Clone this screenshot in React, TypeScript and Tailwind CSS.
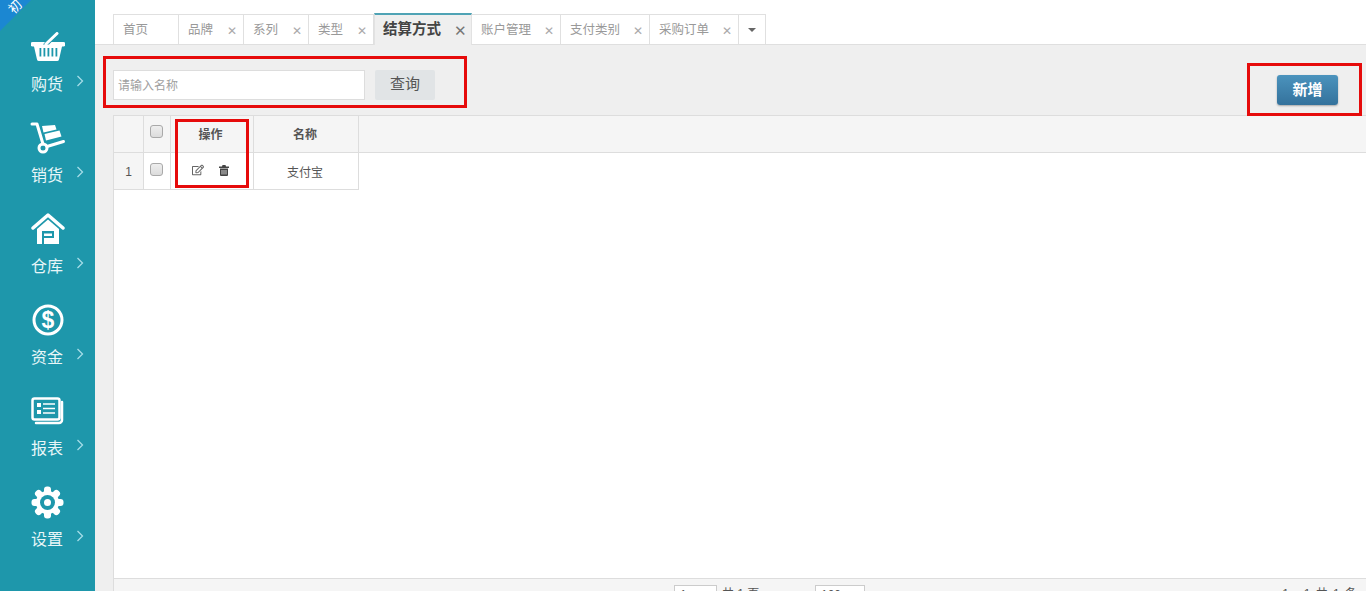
import React from 'react';
import { FaRegEdit } from 'react-icons/fa';

const BasketIcon = () => (
  <svg width="34" height="30" viewBox="0 0 34 30" fill="#fff">
    <path d="M15 12 L26 1.5" stroke="#fff" strokeWidth="3" strokeLinecap="round" fill="none" />
    <path d="M1.5 10 H14 L12 12.5 H18 L20.5 10 H32.5 A1.5 1.5 0 0 1 32.5 14.5 H31 L28 27.5 A2 2 0 0 1 26 29 H8 A2 2 0 0 1 6 27.5 L3 14.5 H1.5 A1.5 1.5 0 0 1 1.5 10z" />
    <g fill="#1e97ab">
      <rect x="8.5" y="16" width="1.8" height="8.5" />
      <rect x="12.5" y="16" width="1.8" height="8.5" />
      <rect x="16.5" y="16" width="1.8" height="8.5" />
      <rect x="20.5" y="16" width="1.8" height="8.5" />
      <rect x="24.5" y="16" width="1.8" height="8.5" />
    </g>
  </svg>
);

const CartIcon = () => (
  <svg width="36" height="32" viewBox="0 0 36 32" fill="#fff">
    <path d="M2 2 h5 l6 20" stroke="#fff" strokeWidth="3" strokeLinecap="round" strokeLinejoin="round" fill="none" />
    <path d="M17 24.5 L33.5 19.5" stroke="#fff" strokeWidth="3" strokeLinecap="round" />
    <circle cx="13" cy="26" r="4" fill="none" stroke="#fff" strokeWidth="3" />
    <path d="M12 4 l13 -1 1.5 4.5 -13 3z" />
    <path d="M14.5 12 l15 -3.5 2 6 -15.5 4z" />
  </svg>
);

const HouseIcon = () => (
  <svg width="34" height="32" viewBox="0 0 34 32" fill="#fff">
    <path d="M2 15 L17 2 L32 15" stroke="#fff" strokeWidth="3.5" strokeLinecap="round" strokeLinejoin="round" fill="none" />
    <path d="M6 16 L17 6.5 L28 16 V31 H6z" />
    <rect x="11" y="18" width="12" height="13" fill="#1e97ab" />
    <rect x="13" y="20.5" width="8" height="2.5" fill="#fff" />
    <rect x="13" y="25" width="12" height="6" fill="#fff" />
  </svg>
);

const DollarIcon = () => (
  <svg width="32" height="32" viewBox="0 0 32 32">
    <circle cx="16" cy="16" r="14" fill="none" stroke="#fff" strokeWidth="3" />
    <text x="16" y="24" textAnchor="middle" fill="#fff" fontSize="23" fontWeight="700" fontFamily="'Liberation Sans', sans-serif">$</text>
  </svg>
);

const NewsIcon = () => (
  <svg width="33" height="28" viewBox="0 0 33 28" fill="none" stroke="#fff">
    <rect x="1.5" y="1.5" width="27" height="21" rx="2" strokeWidth="2.5" />
    <path d="M31 5 V23 a3 3 0 0 1 -3 3 H5" strokeWidth="2.5" strokeLinecap="round" />
    <rect x="6" y="6" width="4" height="4" fill="#fff" stroke="none" />
    <rect x="6" y="13" width="4" height="4" fill="#fff" stroke="none" />
    <path d="M12 7 H24 M12 11.5 H24 M12 16 H24" strokeWidth="1.6" />
  </svg>
);

const GearIcon = () => (
  <svg width="33" height="33" viewBox="0 0 33 33" fill="#fff">
    <circle cx="16.5" cy="16.5" r="11.5" />
    {[0, 45, 90, 135, 180, 225, 270, 315].map((deg) => (
      <rect key={deg} x="13" y="0.5" width="7" height="8" rx="3" transform={`rotate(${deg} 16.5 16.5)`} />
    ))}
    <circle cx="16.5" cy="16.5" r="7.5" fill="#1e97ab" />
    <circle cx="16.5" cy="16.5" r="3.5" />
  </svg>
);

const TrashIcon = () => (
  <svg width="10" height="11" viewBox="0 0 10 11" fill="#444">
    <path d="M3.5 0 H6.5 L7 1.5 H10 V3 H0 V1.5 H3z" />
    <path d="M1 3.5 H9 V10 A1 1 0 0 1 8 11 H2 A1 1 0 0 1 1 10z" />
    <path d="M3 5 V9.5 M5 5 V9.5 M7 5 V9.5" stroke="#f4f4f4" strokeWidth="0.8" />
  </svg>
);

const menus = [
  { label: '购货', icon: <BasketIcon /> },
  { label: '销货', icon: <CartIcon /> },
  { label: '仓库', icon: <HouseIcon /> },
  { label: '资金', icon: <DollarIcon /> },
  { label: '报表', icon: <NewsIcon /> },
  { label: '设置', icon: <GearIcon /> },
];

const tabs = [
  { label: '首页', width: 'w-[66px]' },
  { label: '品牌', width: 'w-[65px]', close: true },
  { label: '系列', width: 'w-[65px]', close: true },
  { label: '类型', width: 'w-[65px]', close: true },
  { label: '结算方式', width: 'w-[98px]', close: true, active: true },
  { label: '账户管理', width: 'w-[89px]', close: true },
  { label: '支付类别', width: 'w-[89px]', close: true },
  { label: '采购订单', width: 'w-[89px]', close: true },
];

const Sidebar = () => (
  <aside className="w-[95px] h-full shrink-0 bg-[#1e97ab] relative overflow-hidden pt-[31px]">
    <div className="absolute -left-[22px] -top-[22px] w-[44px] h-[44px] rotate-45 bg-[#1b87d2]" />
    <div className="absolute left-[9px] top-0 text-white text-[13px] leading-[14px] -rotate-45 h-[14px] overflow-hidden">初</div>
    {menus.map((menu) => (
      <div key={menu.label} className="h-[91px] relative flex flex-col items-center">
        <div className="h-[32px] w-[95px] flex items-center justify-center">{menu.icon}</div>
        <div className="mt-[12px] pr-[1px] text-[16px] leading-[20px] text-[#e8f6f8]">{menu.label}</div>
        <svg className="absolute left-[76px] top-[44px]" width="8" height="12" viewBox="0 0 8 12" fill="none" stroke="#a5dde8" strokeWidth="1.3">
          <path d="M1.5 1 L6.5 6 L1.5 11" />
        </svg>
      </div>
    ))}
  </aside>
);

const TabBar = () => (
  <div className="h-[45px] shrink-0 bg-white border-b border-[#dfdfdf] pl-[113px] flex items-end">
    {tabs.map((tab) =>
      tab.active ? (
        <div
          key={tab.label}
          className={`${tab.width} h-[32px] -mb-px bg-[#efefef] border-t-2 border-[#4fa3b5] border-x border-x-[#e2e2e2] flex items-center pl-[8px] text-[14.5px] font-bold text-[#444]`}
        >
          {tab.label}
          <span className="ml-auto mr-[4px] text-[15px] font-normal text-[#777] leading-none">✕</span>
        </div>
      ) : (
        <div
          key={tab.label}
          className={`${tab.width} h-[30px] pt-[2px] border-t border-r border-[#e0e0e0] first:border-l flex items-center pl-[9px] text-[12.5px] text-[#999]`}
        >
          {tab.label}
          {tab.close && <span className="ml-auto mr-[6px] text-[12px] text-[#aaa] leading-none">✕</span>}
        </div>
      ),
    )}
    <div className="w-[27px] h-[30px] border-t border-r border-[#e0e0e0] flex items-center justify-center">
      <div className="border-x-[4px] border-x-transparent border-t-[4px] border-t-[#666]" />
    </div>
  </div>
);

const Toolbar = () => (
  <div className="h-[70px] shrink-0 flex items-start justify-between pl-[18px] pr-[28px]">
    <div className="flex mt-[25px] gap-[10px]">
      <div className="w-[252px] h-[30px] bg-white border border-[#dddddd] flex items-center pl-[4px] pt-[1px] text-[12px] text-[#a0a0a0]">
        请输入名称
      </div>
      <div className="w-[60px] h-[30px] bg-[#e1e4e6] rounded-[2px] flex items-center justify-center pb-[1px] text-[15px] text-[#555]">
        查询
      </div>
    </div>
    <div className="mt-[30px] w-[61px] h-[30px] rounded-[3px] bg-gradient-to-b from-[#4b93bd] to-[#34729c] shadow-[0_1px_2px_rgba(0,0,0,0.3)] flex items-center justify-center text-[15px] font-bold text-white">
      新增
    </div>
  </div>
);

const Checkbox = () => (
  <div className="w-[13px] h-[13px] rounded-[3px] border border-[#a9a9a9] bg-gradient-to-b from-[#eeeeee] to-[#dcdcdc]" />
);

const Grid = () => (
  <div className="flex-1 min-h-0 ml-[18px] bg-white border-l border-t border-[#dddddd] flex flex-col">
    <div className="flex-1 min-h-0 text-[12px] text-[#555]">
      <div className="flex h-[37px] border-b border-[#dddddd]">
        <div className="w-[30px] bg-[#f5f5f5] border-r border-[#dddddd]" />
        <div className="w-[27px] bg-[#f5f5f5] border-r border-[#dddddd] flex justify-center pt-[9px] pr-[2px]">
          <Checkbox />
        </div>
        <div className="w-[83px] bg-[#f5f5f5] border-r border-[#dddddd] flex items-center justify-center pt-[2px] pr-[3px] font-bold">操作</div>
        <div className="w-[105px] bg-[#f5f5f5] border-r border-[#dddddd] flex items-center justify-center pt-[2px] pr-[2px] font-bold">名称</div>
        <div className="flex-1 bg-[#f5f5f5]" />
      </div>
      <div className="flex h-[37px] w-[245px] border-b border-[#dddddd]">
        <div className="w-[30px] bg-[#f5f5f5] border-r border-[#dddddd] flex items-center justify-center pt-[2px] text-[#555]">1</div>
        <div className="w-[27px] border-r border-[#dddddd] flex justify-center pt-[10px] pr-[2px]">
          <Checkbox />
        </div>
        <div className="w-[83px] border-r border-[#dddddd] flex items-center justify-center gap-[15px] pb-[2px] pr-[3px] text-[#666]">
          <FaRegEdit size={12} />
          <TrashIcon />
        </div>
        <div className="w-[105px] border-r border-[#dddddd] flex items-center justify-center pt-[4px] pr-[2px] text-[#555]">支付宝</div>
      </div>
    </div>
    <div className="h-[13px] shrink-0 bg-[#f5f5f5] border-t border-[#dddddd] relative text-[12px] text-[#555]">
      <div className="absolute left-[560px] top-[6px] w-[43px] h-[24px] bg-white border border-[#cccccc] pl-[5px]">1</div>
      <div className="absolute left-[608px] top-[6px]">共 1 页</div>
      <div className="absolute left-[701px] top-[6px] w-[50px] h-[24px] bg-white border border-[#cccccc] pl-[5px]">100</div>
      <div className="absolute right-[8px] top-[6px] tracking-[1px]">1 - 1 共 1 条</div>
    </div>
  </div>
);

export default function App() {
  return (
    <div className="w-[1366px] h-[591px] relative overflow-hidden flex bg-[#efefef] font-['Liberation_Sans','Noto_Sans_CJK_SC',sans-serif]">
      <Sidebar />
      <main className="flex-1 min-w-0 h-full flex flex-col -ml-[95px] pl-[95px]">
        <div className="-ml-[95px]">
          <TabBar />
        </div>
        <Toolbar />
        <Grid />
      </main>
      {/* red annotation boxes drawn over the screenshot */}
      <div className="absolute left-[103px] top-[56px] w-[364px] h-[52px] border-[3px] border-[#e60b0b]" />
      <div className="absolute left-[1247px] top-[63px] w-[115px] h-[53px] border-[3px] border-[#e60b0b]" />
      <div className="absolute left-[175px] top-[119px] w-[74px] h-[69px] border-[3px] border-[#e60b0b]" />
    </div>
  );
}
